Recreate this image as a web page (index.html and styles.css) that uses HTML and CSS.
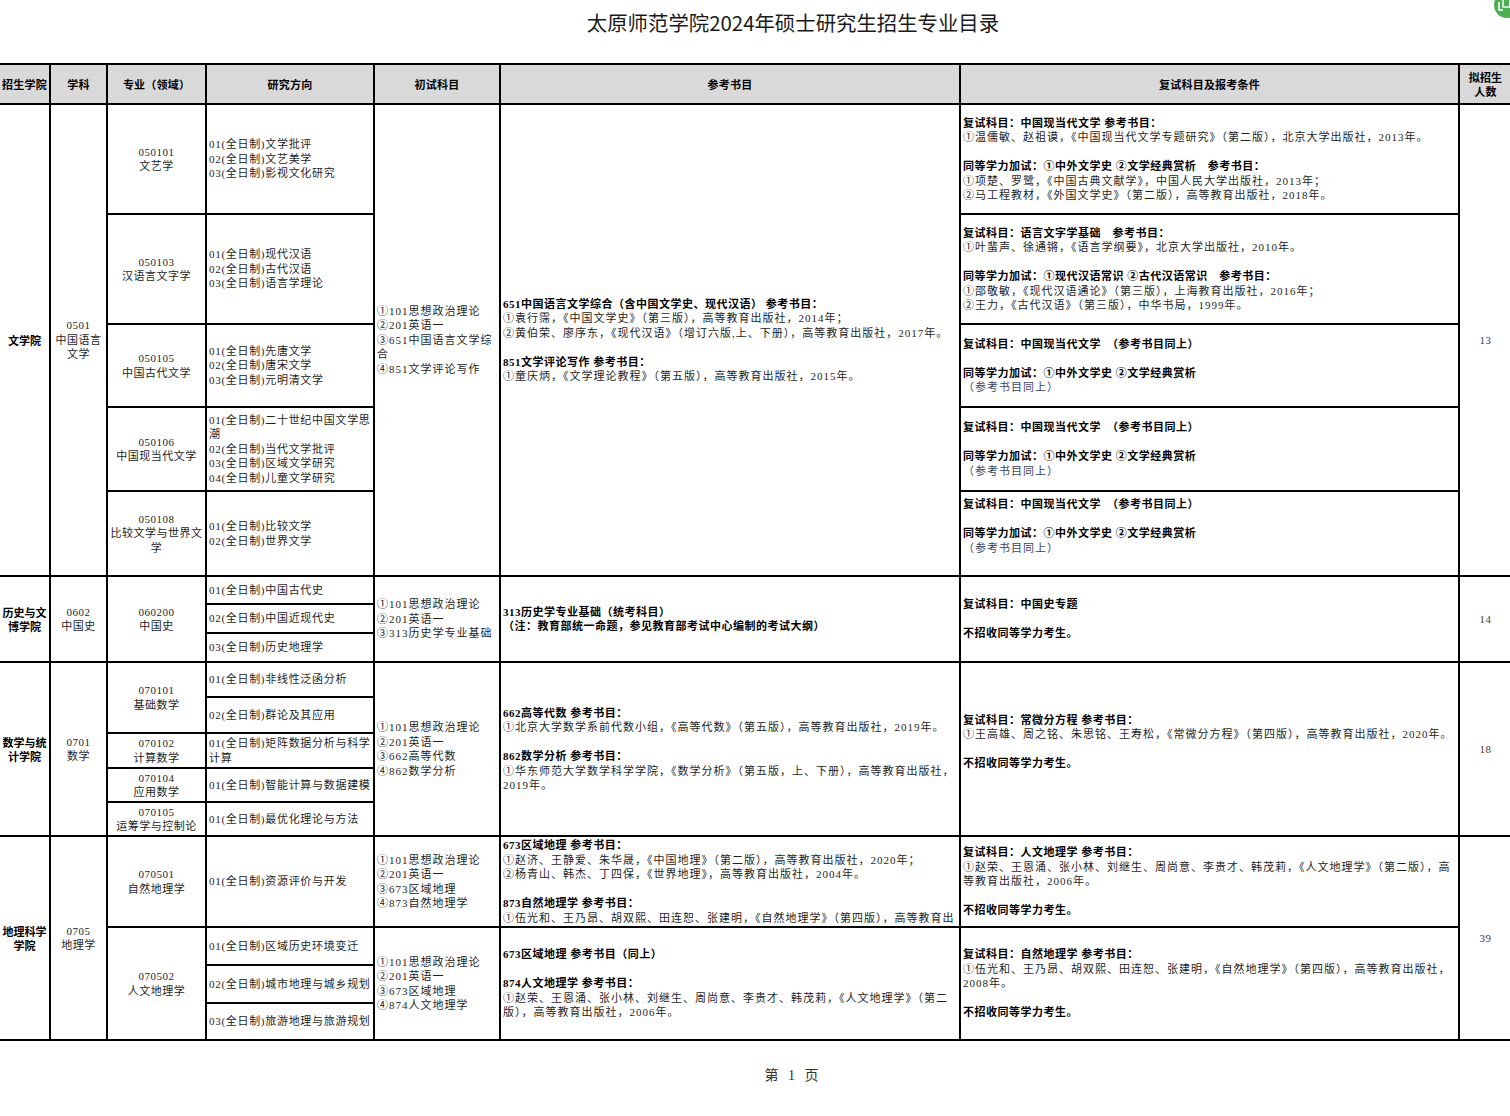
FILE: index.html
```html
<!DOCTYPE html>
<html lang="zh-CN">
<head>
<meta charset="utf-8">
<title>太原师范学院2024年硕士研究生招生专业目录</title>
<link rel="stylesheet" href="styles.css">
</head>
<body>
<div class="page">
  <div class="title">太原师范学院2024年硕士研究生招生专业目录</div>
  <div class="badge" aria-hidden="true">
    <svg width="26" height="26" viewBox="0 0 26 26"><circle cx="13" cy="13" r="13" fill="#4caf50"/><path d="M5 10v8h4" fill="none" stroke="#fff" stroke-width="1.6"/><rect x="9" y="7" width="7" height="8" fill="none" stroke="#fff" stroke-width="1.4"/></svg>
  </div>
  <table class="cat">
    <colgroup>
      <col class="w1"><col class="w2"><col class="w3"><col class="w4"><col class="w5"><col class="w6"><col class="w7"><col class="w8">
    </colgroup>
    <thead>
      <tr class="rh">
        <th>招生学院</th><th>学科</th><th>专业（领域）</th><th>研究方向</th><th>初试科目</th><th>参考书目</th><th>复试科目及报考条件</th><th>拟招生<br>人数</th>
      </tr>
    </thead>
    <tbody>
      <!-- 文学院 -->
      <tr class="h110">
        <td rowspan="5" class="c b">文学院</td>
        <td rowspan="5" class="c">0501<br>中国语言<br>文学</td>
        <td class="c">050101<br>文艺学</td>
        <td class="d">01(全日制)文学批评<br>02(全日制)文艺美学<br>03(全日制)影视文化研究</td>
        <td rowspan="5">①101思想政治理论<br>②201英语一<br>③651中国语言文学综<br>合<br>④851文学评论写作</td>
        <td rowspan="5">
          <div class="b">651中国语言文学综合（含中国文学史、现代汉语） 参考书目：</div>
          <div>①袁行霈，《中国文学史》（第三版），高等教育出版社，2014年；</div>
          <div>②黄伯荣、廖序东，《现代汉语》（增订六版,上、下册），高等教育出版社，2017年。</div>
          <div class="b gap">851文学评论写作 参考书目：</div>
          <div>①童庆炳，《文学理论教程》（第五版），高等教育出版社，2015年。</div>
        </td>
        <td>
          <div class="b">复试科目：中国现当代文学 参考书目：</div>
          <div>①温儒敏、赵祖谟，《中国现当代文学专题研究》（第二版），北京大学出版社，2013年。</div>
          <div class="b gap">同等学力加试：①中外文学史 ②文学经典赏析　参考书目：</div>
          <div>①项楚、罗鹭，《中国古典文献学》，中国人民大学出版社，2013年；</div>
          <div>②马工程教材，《外国文学史》（第二版），高等教育出版社，2018年。</div>
        </td>
        <td rowspan="5" class="c num">13</td>
      </tr>
      <tr class="h110">
        <td class="c">050103<br>汉语言文字学</td>
        <td class="d">01(全日制)现代汉语<br>02(全日制)古代汉语<br>03(全日制)语言学理论</td>
        <td>
          <div class="b">复试科目：语言文字学基础　参考书目：</div>
          <div>①叶蜚声、徐通锵，《语言学纲要》，北京大学出版社，2010年。</div>
          <div class="b gap">同等学力加试：①现代汉语常识 ②古代汉语常识　参考书目：</div>
          <div>①邵敬敏，《现代汉语通论》（第三版），上海教育出版社，2016年；</div>
          <div>②王力，《古代汉语》（第三版），中华书局，1999年。</div>
        </td>
      </tr>
      <tr class="h83">
        <td class="c">050105<br>中国古代文学</td>
        <td class="d">01(全日制)先唐文学<br>02(全日制)唐宋文学<br>03(全日制)元明清文学</td>
        <td>
          <div class="b">复试科目：中国现当代文学　（参考书目同上）</div>
          <div class="b gap">同等学力加试：①中外文学史 ②文学经典赏析</div>
          <div class="same">（参考书目同上）</div>
        </td>
      </tr>
      <tr class="h84">
        <td class="c">050106<br>中国现当代文学</td>
        <td class="d">01(全日制)二十世纪中国文学思<br>潮<br>02(全日制)当代文学批评<br>03(全日制)区域文学研究<br>04(全日制)儿童文学研究</td>
        <td>
          <div class="b">复试科目：中国现当代文学　（参考书目同上）</div>
          <div class="b gap">同等学力加试：①中外文学史 ②文学经典赏析</div>
          <div class="same">（参考书目同上）</div>
        </td>
      </tr>
      <tr class="h85">
        <td class="c">050108<br>比较文学与世界文<br>学</td>
        <td class="d">01(全日制)比较文学<br>02(全日制)世界文学</td>
        <td>
          <div class="b">复试科目：中国现当代文学　（参考书目同上）</div>
          <div class="b gap">同等学力加试：①中外文学史 ②文学经典赏析</div>
          <div class="same">（参考书目同上）</div>
          <div class="blank"></div>
        </td>
      </tr>

      <!-- 历史与文博学院 -->
      <tr class="h28">
        <td rowspan="3" class="c b">历史与文<br>博学院</td>
        <td rowspan="3" class="c">0602<br>中国史</td>
        <td rowspan="3" class="c">060200<br>中国史</td>
        <td class="d">01(全日制)中国古代史</td>
        <td rowspan="3">①101思想政治理论<br>②201英语一<br>③313历史学专业基础</td>
        <td rowspan="3">
          <div class="b">313历史学专业基础（统考科目）</div>
          <div class="b">（注：教育部统一命题，参见教育部考试中心编制的考试大纲）</div>
        </td>
        <td rowspan="3">
          <div class="b">复试科目：中国史专题</div>
          <div class="b gap">不招收同等学力考生。</div>
        </td>
        <td rowspan="3" class="c num">14</td>
      </tr>
      <tr class="h29"><td class="d">02(全日制)中国近现代史</td></tr>
      <tr class="h29"><td class="d">03(全日制)历史地理学</td></tr>

      <!-- 数学与统计学院 -->
      <tr class="h35">
        <td rowspan="5" class="c b">数学与统<br>计学院</td>
        <td rowspan="5" class="c">0701<br>数学</td>
        <td rowspan="2" class="c">070101<br>基础数学</td>
        <td class="d">01(全日制)非线性泛函分析</td>
        <td rowspan="5">①101思想政治理论<br>②201英语一<br>③662高等代数<br>④862数学分析</td>
        <td rowspan="5">
          <div class="b">662高等代数 参考书目：</div>
          <div>①北京大学数学系前代数小组，《高等代数》（第五版），高等教育出版社，2019年。</div>
          <div class="b gap">862数学分析 参考书目：</div>
          <div>①华东师范大学数学科学学院，《数学分析》（第五版，上、下册），高等教育出版社，<br>2019年。</div>
        </td>
        <td rowspan="5">
          <div class="b">复试科目：常微分方程 参考书目：</div>
          <div>①王高雄、周之铭、朱思铭、王寿松，《常微分方程》（第四版），高等教育出版社，2020年。</div>
          <div class="b gap">不招收同等学力考生。</div>
          <div class="blank"></div>
        </td>
        <td rowspan="5" class="c num">18</td>
      </tr>
      <tr class="h36"><td class="d">02(全日制)群论及其应用</td></tr>
      <tr class="h35">
        <td class="c">070102<br>计算数学</td>
        <td class="d">01(全日制)矩阵数据分析与科学<br>计算</td>
      </tr>
      <tr class="h34">
        <td class="c">070104<br>应用数学</td>
        <td class="d">01(全日制)智能计算与数据建模</td>
      </tr>
      <tr class="h34">
        <td class="c">070105<br>运筹学与控制论</td>
        <td class="d">01(全日制)最优化理论与方法</td>
      </tr>

      <!-- 地理科学学院 -->
      <tr class="h91">
        <td rowspan="4" class="c b">地理科学<br>学院</td>
        <td rowspan="4" class="c">0705<br>地理学</td>
        <td class="c">070501<br>自然地理学</td>
        <td class="d">01(全日制)资源评价与开发</td>
        <td>①101思想政治理论<br>②201英语一<br>③673区域地理<br>④873自然地理学</td>
        <td class="top">
          <div class="clip">
            <div class="b">673区域地理 参考书目：</div>
            <div>①赵济、王静爱、朱华晟，《中国地理》（第二版），高等教育出版社，2020年；</div>
            <div>②杨青山、韩杰、丁四保，《世界地理》，高等教育出版社，2004年。</div>
            <div class="b gap">873自然地理学 参考书目：</div>
            <div>①伍光和、王乃昂、胡双熙、田连恕、张建明，《自然地理学》（第四版），高等教育出版社，2008年。</div>
          </div>
        </td>
        <td>
          <div class="b">复试科目：人文地理学 参考书目：</div>
          <div>①赵荣、王恩涌、张小林、刘继生、周尚意、李贵才、韩茂莉，《人文地理学》（第二版），高<br>等教育出版社，2006年。</div>
          <div class="b gap">不招收同等学力考生。</div>
        </td>
        <td rowspan="4" class="c num">39</td>
      </tr>
      <tr class="h38">
        <td rowspan="3" class="c">070502<br>人文地理学</td>
        <td class="d">01(全日制)区域历史环境变迁</td>
        <td rowspan="3">①101思想政治理论<br>②201英语一<br>③673区域地理<br>④874人文地理学</td>
        <td rowspan="3">
          <div class="b">673区域地理 参考书目（同上）</div>
          <div class="b gap">874人文地理学 参考书目：</div>
          <div>①赵荣、王恩涌、张小林、刘继生、周尚意、李贵才、韩茂莉，《人文地理学》（第二<br>版），高等教育出版社，2006年。</div>
        </td>
        <td rowspan="3">
          <div class="b">复试科目：自然地理学 参考书目：</div>
          <div>①伍光和、王乃昂、胡双熙、田连恕、张建明，《自然地理学》（第四版），高等教育出版社，<br>2008年。</div>
          <div class="b gap">不招收同等学力考生。</div>
        </td>
      </tr>
      <tr class="h38"><td class="d">02(全日制)城市地理与城乡规划</td></tr>
      <tr class="h37"><td class="d">03(全日制)旅游地理与旅游规划</td></tr>
    </tbody>
  </table>
  <div class="footer">第 1 页</div>
</div>
</body>
</html>
```
FILE: styles.css
```css
html, body {
  margin: 0;
  padding: 0;
  background: #ffffff;
  overflow: hidden;
}

body {
  font-family: "Liberation Serif", "Noto Sans CJK SC", serif;
  font-size: 11px;
  color: #1e1e1e;
}

.page {
  position: relative;
  width: 1510px;
  height: 1116px;
}

.title {
  height: 63px;
  line-height: 44px;
  padding-left: 76px;
  text-align: center;
  font-family: "Noto Sans CJK SC", sans-serif;
  font-size: 20.4px;
  color: #1a1a1a;
}

.badge {
  position: absolute;
  left: 1494px;
  top: -8px;
  width: 26px;
  height: 26px;
}

.cat {
  border-collapse: collapse;
  table-layout: fixed;
  width: 1513px;
  margin-left: -2px;
}

.w1 { width: 51px; }
.w2 { width: 57px; }
.w3 { width: 99px; }
.w4 { width: 168px; }
.w5 { width: 126px; }
.w6 { width: 460px; }
.w7 { width: 499px; }
.w8 { width: 53px; }

.cat th,
.cat td {
  border: 2px solid #000;
  padding: 0 2px;
  vertical-align: middle;
  line-height: 14.5px;
  letter-spacing: 1px;
  white-space: nowrap;
  overflow: hidden;
  text-align: left;
  font-weight: normal;
}

.cat th {
  background: #d9d9d9;
  text-align: center;
  font-family: "Noto Sans CJK SC", sans-serif;
  font-weight: 700;
  color: #000;
  letter-spacing: 0.2px;
  line-height: 14px;
}

.rh { height: 40px; }
.h110 { height: 110px; }
.h83 { height: 83px; }
.h84 { height: 84px; }
.h85 { height: 85px; }
.h28 { height: 28px; }
.h29 { height: 29px; }
.h35 { height: 35px; }
.h36 { height: 36px; }
.h34 { height: 34px; }
.h91 { height: 91px; }
.h38 { height: 38px; }
.h37 { height: 37px; }

.cat td.c {
  text-align: center;
  letter-spacing: 0.5px;
}

.cat td.d { letter-spacing: 0.7px; }

.b {
  font-weight: 700;
  color: #000;
  letter-spacing: 0.5px;
}

.cat td.b {
  font-family: "Noto Sans CJK SC", sans-serif;
  font-weight: 700;
  color: #000;
  letter-spacing: 0;
}

.gap { margin-top: 14.5px; }
.blank { height: 14.5px; }

.same { color: #3a4560; }

.num { color: #4a3c30; }

.cat td.top { vertical-align: top; }

.clip {
  height: 88px;
  padding-top: 1px;
  overflow: hidden;
  box-sizing: border-box;
  white-space: normal;
}

.footer {
  margin-top: 25px;
  padding-left: 76px;
  text-align: center;
  line-height: 20px;
  font-size: 14px;
  color: #333;
  letter-spacing: 3px;
}
```
